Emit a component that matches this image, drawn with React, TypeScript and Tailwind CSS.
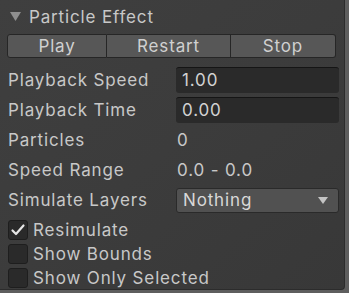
import React from "react";

const font = { fontFamily: "Inter, 'Noto Sans', sans-serif" };

function Check({ checked }: { checked?: boolean }) {
  return (
    <div className="w-[20px] h-[20px] rounded-[3px] bg-[#2a2a2a] border border-[#1e1e1e] flex items-center justify-center">
      {checked && (
        <svg width="16" height="16" viewBox="0 0 16 16">
          <path d="M2.5 8.5 L6 12 L13.5 3.5" fill="none" stroke="#e6e6e6" strokeWidth="2.2" strokeLinecap="round" strokeLinejoin="round" />
        </svg>
      )}
    </div>
  );
}

export default function App() {
  return (
    <div className="w-[349px] h-[293px] bg-[#5e5e5e] overflow-hidden" style={font}>
      <div className="w-[345px] h-[290px] bg-gradient-to-br from-[#3f3f3f] via-[#3c3c3c] to-[#383838] border-r border-b border-[#2c2c2c] rounded-br-[4px] text-[#c8c8c8] text-[17px] leading-none tracking-[0.85px]">
        <div className="flex items-center h-[34px] pl-[10px]">
          <svg width="11" height="10" viewBox="0 0 11 10" className="mr-[8px]">
            <path d="M0 0 H11 L5.5 9 Z" fill="#8f8f8f" />
          </svg>
          <span>Particle Effect</span>
        </div>
        <div className="flex ml-[7px] w-[329px] h-[24px] text-[#d0d0d0]">
          <div className="flex-[99] flex items-center justify-center bg-[#575757] border border-[#262626] rounded-l-[3px]">Play</div>
          <div className="flex-[124] flex items-center justify-center bg-[#575757] border-y border-r border-[#262626]">Restart</div>
          <div className="flex-[105] flex items-center justify-center bg-[#575757] border-y border-r border-[#262626] rounded-r-[3px]">Stop</div>
        </div>
        <div className="flex flex-col pl-[8px] pr-[5px] mt-[7px]">
          <div className="flex items-center h-[30px]">
            <span className="w-[168px]">Playback Speed</span>
            <div className="flex-1 h-[26px] bg-[#2a2a2a] border-t border-[#151515] rounded-[3px] flex items-center pl-[6px] text-[#d2d2d2]">1.00</div>
          </div>
          <div className="flex items-center h-[30px]">
            <span className="w-[168px]">Playback Time</span>
            <div className="flex-1 h-[26px] bg-[#2a2a2a] border-t border-[#151515] rounded-[3px] flex items-center pl-[6px] text-[#d2d2d2]">0.00</div>
          </div>
          <div className="flex items-center h-[30px]">
            <span className="w-[168px]">Particles</span>
            <span className="pl-[1px]">0</span>
          </div>
          <div className="flex items-center h-[30px]">
            <span className="w-[168px]">Speed Range</span>
            <span className="pl-[1px]">0.0 - 0.0</span>
          </div>
          <div className="flex items-center h-[30px]">
            <span className="w-[168px]">Simulate Layers</span>
            <div className="flex-1 h-[25px] bg-[#515151] border border-[#2a2a2a] rounded-[3px] flex items-center justify-between pl-[6px] pr-[10px] text-[#d8d8d8]">
              <span>Nothing</span>
              <svg width="10" height="7" viewBox="0 0 10 7">
                <path d="M0 0 H10 L5 7 Z" fill="#c4c4c4" />
              </svg>
            </div>
          </div>
          <div className="flex flex-col mt-[3px]">
            <div className="flex items-center h-[24px] gap-[5px]">
              <Check checked />
              <span>Resimulate</span>
            </div>
            <div className="flex items-center h-[24px] gap-[5px]">
              <Check />
              <span>Show Bounds</span>
            </div>
            <div className="flex items-center h-[24px] gap-[5px]">
              <Check />
              <span>Show Only Selected</span>
            </div>
          </div>
        </div>
      </div>
    </div>
  );
}
